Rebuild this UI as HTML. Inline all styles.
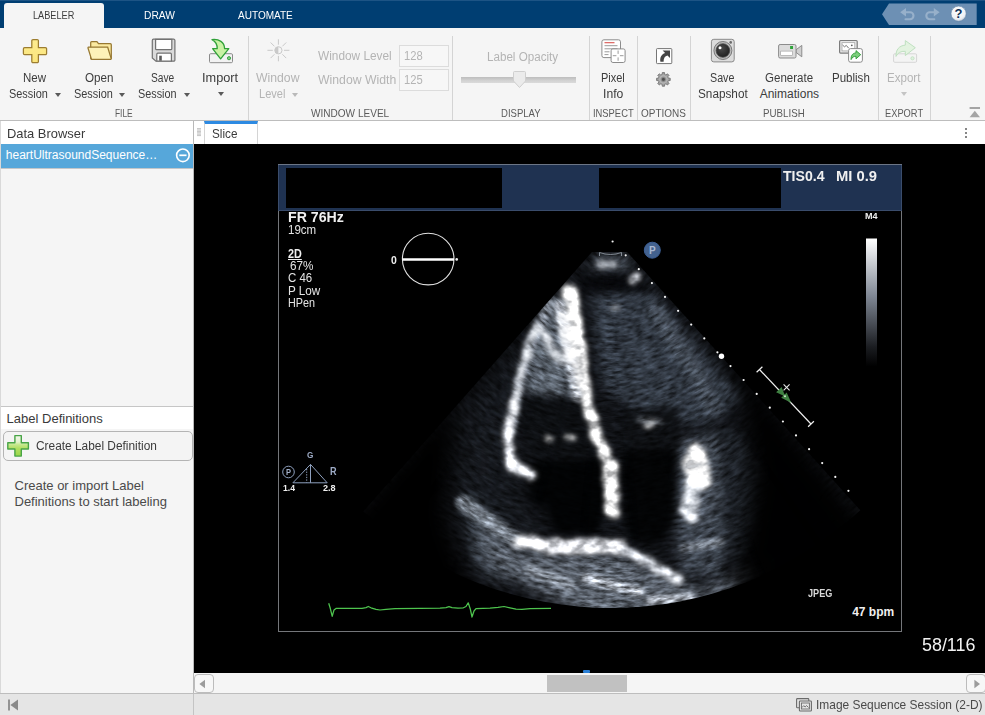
<!DOCTYPE html>
<html><head><meta charset="utf-8">
<style>
*{box-sizing:border-box;margin:0;padding:0}
html,body{width:985px;height:715px;overflow:hidden;background:#f5f5f5;font-family:"Liberation Sans",sans-serif;}
.a{position:absolute;white-space:nowrap}
.t{position:absolute;white-space:nowrap;font-size:12px;color:#3c3c3c;line-height:14px;transform-origin:0 0}
.c{text-align:center}
.dis{color:#b4b4b4}
.sec{position:absolute;white-space:nowrap;font-size:11px;color:#5a5a5a;line-height:12px;transform-origin:0 0}
.sep{position:absolute;top:36px;width:1px;height:84px;background:#d4d4d4}
.tab{position:absolute;white-space:nowrap;font-size:11px;color:#fff;line-height:12px;transform-origin:0 0}
.us{position:absolute;white-space:nowrap;color:#f0f0f0;line-height:12px;font-size:12px;transform-origin:0 0}
</style></head><body>
<!-- top bar -->
<div class="a" style="left:0;top:0;width:985px;height:28px;background:#003e72"></div>
<div class="a" style="left:0;top:0;width:985px;height:1px;background:#1d5485"></div>
<div class="a" style="left:4px;top:3px;width:100px;height:26px;background:#f5f5f5;border-radius:3px 3px 0 0"></div>
<div class="tab" id="tLab" style="left:33.2px;top:9.0px;font-size:11px;line-height:13px;transform:scaleX(0.834);color:#3c3c3c;">LABELER</div>
<div class="tab" id="tDraw" style="left:144.2px;top:9.0px;font-size:11px;line-height:13px;transform:scaleX(0.931);">DRAW</div>
<div class="tab" id="tAuto" style="left:238.1px;top:9.0px;font-size:11px;line-height:13px;transform:scaleX(0.912);">AUTOMATE</div>
<!-- toolstrip bg -->
<div class="a" style="left:0;top:28px;width:985px;height:92px;background:#f5f5f5"></div>
<div class="a" style="left:0;top:120px;width:985px;height:1px;background:#bdbdbd"></div>
<div class="sep" style="left:248px"></div>
<div class="sep" style="left:452px"></div>
<div class="sep" style="left:589px"></div>
<div class="sep" style="left:637px"></div>
<div class="sep" style="left:690px"></div>
<div class="sep" style="left:878px"></div>
<div class="sep" style="left:930px"></div>
<div class="t" style="left:22.9px;top:70.5px;font-size:12px;line-height:14px;transform:scaleX(0.958);">New</div>
<div class="t" style="left:8.9px;top:86.5px;font-size:12px;line-height:14px;transform:scaleX(0.909);">Session</div>
<div class="t" style="left:84.5px;top:70.5px;font-size:12px;line-height:14px;transform:scaleX(0.971);">Open</div>
<div class="t" style="left:73.6px;top:86.5px;font-size:12px;line-height:14px;transform:scaleX(0.911);">Session</div>
<div class="t" style="left:151.3px;top:70.5px;font-size:12px;line-height:14px;transform:scaleX(0.852);">Save</div>
<div class="t" style="left:138.1px;top:86.5px;font-size:12px;line-height:14px;transform:scaleX(0.904);">Session</div>
<div class="t" style="left:202.0px;top:70.5px;font-size:12px;line-height:14px;transform:scaleX(1.062);">Import</div>
<div class="a" style="left:54.8px;top:92.5px;width:0;height:0;border-left:3.5px solid transparent;border-right:3.5px solid transparent;border-top:4px solid #5a5a5a"></div>
<div class="a" style="left:119.4px;top:92.5px;width:0;height:0;border-left:3.5px solid transparent;border-right:3.5px solid transparent;border-top:4px solid #5a5a5a"></div>
<div class="a" style="left:183.7px;top:92.5px;width:0;height:0;border-left:3.5px solid transparent;border-right:3.5px solid transparent;border-top:4px solid #5a5a5a"></div>
<div class="a" style="left:218.0px;top:91.5px;width:0;height:0;border-left:3.5px solid transparent;border-right:3.5px solid transparent;border-top:4px solid #5a5a5a"></div>
<div class="sec" style="left:115.0px;top:106.5px;font-size:11px;line-height:13px;transform:scaleX(0.762);">FILE</div>
<div class="t" style="left:256.3px;top:70.5px;font-size:12px;line-height:14px;transform:scaleX(1.019);color:#b4b4b4;">Window</div>
<div class="t" style="left:259.1px;top:86.5px;font-size:12px;line-height:14px;transform:scaleX(0.920);color:#b4b4b4;">Level</div>
<div class="a" style="left:292.0px;top:92.5px;width:0;height:0;border-left:3.5px solid transparent;border-right:3.5px solid transparent;border-top:4px solid #b9b9b9"></div>
<div class="t" style="left:317.7px;top:49.4px;font-size:12px;line-height:14px;transform:scaleX(0.987);color:#b4b4b4;">Window Level</div>
<div class="t" style="left:317.7px;top:73.1px;font-size:12px;line-height:14px;transform:scaleX(1.020);color:#b4b4b4;">Window Width</div>
<div class="a" style="left:399px;top:45px;width:50px;height:22px;border:1px solid #dcdcdc;background:#f7f7f7"></div>
<div class="a" style="left:399px;top:69px;width:50px;height:22px;border:1px solid #dcdcdc;background:#f7f7f7"></div>
<div class="t" style="left:404.3px;top:49.4px;font-size:12px;line-height:14px;transform:scaleX(0.934);color:#b4b4b4;">128</div>
<div class="t" style="left:404.3px;top:73.1px;font-size:12px;line-height:14px;transform:scaleX(0.934);color:#b4b4b4;">125</div>
<div class="sec" style="left:310.5px;top:106.5px;font-size:11px;line-height:13px;transform:scaleX(0.914);">WINDOW LEVEL</div>
<div class="t" style="left:486.8px;top:49.8px;font-size:12px;line-height:14px;transform:scaleX(0.969);color:#b4b4b4;">Label Opacity</div>
<div class="a" style="left:461px;top:77px;width:115px;height:6px;background:linear-gradient(#bdbdbd,#d2d2d2 60%,#dadada)"></div>
<svg class="a" style="left:512px;top:70px" width="16" height="19" viewBox="0 0 16 19"><path d="M2.5 1.5h10a1 1 0 0 1 1 1v8.5l-6 6.5l-6-6.5v-8.5a1 1 0 0 1 1-1z" fill="#ebebeb" stroke="#cfcfcf" stroke-width="1"/></svg>
<div class="sec" style="left:500.8px;top:106.5px;font-size:11px;line-height:13px;transform:scaleX(0.867);">DISPLAY</div>
<div class="t" style="left:601.3px;top:70.5px;font-size:12px;line-height:14px;transform:scaleX(0.915);">Pixel</div>
<div class="t" style="left:603.1px;top:86.5px;font-size:12px;line-height:14px;transform:scaleX(1.014);">Info</div>
<div class="sec" style="left:592.9px;top:106.5px;font-size:11px;line-height:13px;transform:scaleX(0.852);">INSPECT</div>
<div class="sec" style="left:641.1px;top:106.5px;font-size:11px;line-height:13px;transform:scaleX(0.907);">OPTIONS</div>
<div class="t" style="left:710.4px;top:70.5px;font-size:12px;line-height:14px;transform:scaleX(0.892);">Save</div>
<div class="t" style="left:698.2px;top:86.5px;font-size:12px;line-height:14px;transform:scaleX(0.980);">Snapshot</div>
<div class="t" style="left:765.2px;top:70.5px;font-size:12px;line-height:14px;transform:scaleX(0.961);">Generate</div>
<div class="t" style="left:759.7px;top:86.5px;font-size:12px;line-height:14px;">Animations</div>
<div class="t" style="left:831.6px;top:70.5px;font-size:12px;line-height:14px;transform:scaleX(0.960);">Publish</div>
<div class="sec" style="left:763.1px;top:106.5px;font-size:11px;line-height:13px;transform:scaleX(0.886);">PUBLISH</div>
<div class="t" style="left:887.1px;top:70.5px;font-size:12px;line-height:14px;transform:scaleX(0.963);color:#b4b4b4;">Export</div>
<div class="a" style="left:900.5px;top:92.0px;width:0;height:0;border-left:3.5px solid transparent;border-right:3.5px solid transparent;border-top:4px solid #c4c4c4"></div>
<div class="sec" style="left:884.9px;top:106.5px;font-size:11px;line-height:13px;transform:scaleX(0.846);">EXPORT</div>
<svg class="a" style="left:0;top:0" width="985" height="121" viewBox="0 0 985 121">
<defs>
<linearGradient id="gPlus" x1="0" y1="0" x2="0" y2="1"><stop offset="0" stop-color="#fdec90"/><stop offset="1" stop-color="#fbe57c"/></linearGradient>
<radialGradient id="gLens" cx="0.4" cy="0.35" r="0.7"><stop offset="0" stop-color="#4a4a4a"/><stop offset="1" stop-color="#1e1e1e"/></radialGradient>
<radialGradient id="gGear" cx="0.5" cy="0.5" r="0.5"><stop offset="0" stop-color="#5e5e5e"/><stop offset="0.3" stop-color="#8a8a8a"/><stop offset="0.5" stop-color="#b6b6b6"/><stop offset="0.75" stop-color="#a2a2a2"/><stop offset="1" stop-color="#929292"/></radialGradient>
<radialGradient id="gHelp" cx="0.45" cy="0.35" r="0.7"><stop offset="0" stop-color="#ffffff"/><stop offset="0.7" stop-color="#eef1f5"/><stop offset="1" stop-color="#b9c4d2"/></radialGradient>
</defs>
<!-- New Session plus -->
<path d="M33 39.5h4.200a1.2 1.2 0 0 1 1.2 1.2v7h7a1.2 1.2 0 0 1 1.2 1.2v4.500a1.2 1.2 0 0 1 -1.2 1.2h-7v6.900a1.2 1.2 0 0 1 -1.2 1.2h-4.200a1.2 1.2 0 0 1 -1.2 -1.2v-6.900h-7.200a1.2 1.2 0 0 1 -1.2 -1.2v-4.500a1.2 1.2 0 0 1 1.2 -1.2h7.200v-7a1.2 1.2 0 0 1 1.2 -1.2z" fill="url(#gPlus)" stroke="#9c7d30" stroke-width="1.250"/>
<!-- Open folder -->
<path d="M90.7 42.6a1 1 0 0 1 1-1h5.2l1.6 2.1h11.8a1 1 0 0 1 1 1v13.6l-1 1h-18.6a1 1 0 0 1 -1-1z" fill="#fbeaa0" stroke="#977832" stroke-width="1.250"/>
<path d="M88.5 47.2h19.2l3.4 11.2a0.8 0.8 0 0 1 -0.8 1h-18a1 1 0 0 1 -1-0.8l-3.3-10.6a0.7 0.7 0 0 1 0.5 -0.8z" fill="#fdf2b8" stroke="#977832" stroke-width="1.250"/>
<!-- Save floppy -->
<path d="M153.5 39.2h20.2a1.2 1.2 0 0 1 1.2 1.2v19.6a1.2 1.2 0 0 1 -1.2 1.2h-17.8l-3.6-3.2v-17.6a1.2 1.2 0 0 1 1.2 -1.2z" fill="#dadada" stroke="#727272" stroke-width="1.200"/>
<path d="M155.6 39.3h16.2v9.4a1 1 0 0 1 -1 1h-14.2a1 1 0 0 1 -1-1z" fill="#ffffff" stroke="#727272" stroke-width="1.200"/>
<path d="M156.8 61.2v-7a1 1 0 0 1 1-1h12.6a1 1 0 0 1 1 1v7z" fill="#ffffff" stroke="#727272" stroke-width="1.200"/>
<rect x="159.2" y="55.7" width="2.6" height="5" fill="#5a5a5a"/>
<!-- Import -->
<rect x="209.5" y="53.7" width="23" height="9" rx="1.2" fill="#f2f2f2" stroke="#8a8a8a" stroke-width="1"/>
<circle cx="229" cy="58.2" r="1.6" fill="#7ed07e" stroke="#2f9e3a" stroke-width="0.9"/>
<path d="M212 39.6c7-0.8 12.500 2.400 12.600 9.100h4.200l-8.200 10.100l-8.000 -10.100h4.600c0.200-4.200-1.800-7.300-5.200-9.100z" fill="#c9f2a4" stroke="#2fa038" stroke-width="1.300" stroke-linejoin="round"/>
<!-- Window level (disabled) -->
<g stroke="#c9c9c9" stroke-width="1" fill="none">
<circle cx="278.4" cy="50.3" r="3.6"/>
<path d="M278.4 46.7a3.6 3.6 0 0 0 0 7.2z" fill="#c9c9c9" stroke="none"/>
<path d="M278.4 39.3v5.400M278.4 55.900v5.400M267.400 50.300h5.400M284 50.300h5.400M270.600 42.500l3.800 3.800M282.400 54.300l3.800 3.800M286.200 42.500l-3.800 3.800M274.400 54.300l-3.800 3.800"/>
</g>
<!-- Pixel info -->
<rect x="601.9" y="39.8" width="18.600" height="17.800" rx="2" fill="#ffffff" stroke="#8c8c8c" stroke-width="1"/>
<path d="M604.500 42.700h10" stroke="#d9534f" stroke-width="1.100"/>
<path d="M604.500 45.700h13M604.500 48.800h13M604.500 51.800h5M604.500 54.600h4" stroke="#9a9a9a" stroke-width="1"/>
<rect x="611.100" y="48.900" width="14" height="13.600" rx="1.800" fill="#ffffff" stroke="#8c8c8c" stroke-width="1"/>
<path d="M618.100 50.500v3.400M618.100 57.400v3.400M612.800 55.700h3.600M619.900 55.700h3.600" stroke="#9a9a9a" stroke-width="1"/>
<!-- Options: pop-out -->
<rect x="656.500" y="48.600" width="15.300" height="15" rx="0.800" fill="#ffffff" stroke="#767676" stroke-width="1"/>
<path d="M662.600 50.600h7.400v7.400l-2.500-2.500c-2.700 0.900-4 2.700-3.900 6.200h-3.200c-0.700-4.300 1.100-7.300 4.700-8.600z" fill="#444444"/>
<!-- Options: gear -->
<g transform="translate(663.4 79.4)"><path d="M-1.28 -4.94 L-1.14 -6.81 L1.14 -6.81 L1.28 -4.94 L2.59 -4.39 L4.01 -5.62 L5.62 -4.01 L4.39 -2.59 L4.94 -1.28 L6.81 -1.14 L6.81 1.14 L4.94 1.28 L4.39 2.59 L5.62 4.01 L4.01 5.62 L2.59 4.39 L1.28 4.94 L1.14 6.81 L-1.14 6.81 L-1.28 4.94 L-2.59 4.39 L-4.01 5.62 L-5.62 4.01 L-4.39 2.59 L-4.94 1.28 L-6.81 1.14 L-6.81 -1.14 L-4.94 -1.28 L-4.39 -2.59 L-5.62 -4.01 L-4.01 -5.62 L-2.59 -4.39Z" fill="url(#gGear)" stroke="#767676" stroke-width="0.9" stroke-linejoin="round"/><circle r="1.4" fill="#4e4e4e"/></g>
<!-- Save snapshot -->
<rect x="711.400" y="39.300" width="22.800" height="22.600" rx="2.400" fill="#dcdcdc" stroke="#8a8a8a" stroke-width="1"/>
<circle cx="722.900" cy="50.500" r="9" fill="#b9b9b9" stroke="#7a7a7a" stroke-width="1"/>
<circle cx="722.900" cy="50.500" r="6.800" fill="url(#gLens)" stroke="#4a4a4a" stroke-width="0.800"/>
<circle cx="720" cy="47.700" r="1.500" fill="#ffffff"/>
<circle cx="730.700" cy="42.400" r="1.300" fill="#6a6a6a"/>
<!-- Generate animations -->
<path d="M796 49.800l5.800-4.400v11.400l-5.800-4.400z" fill="#d0d0d0" stroke="#8c8c8c" stroke-width="1" stroke-linejoin="round"/>
<rect x="778.600" y="44.500" width="17.400" height="13.500" rx="1.500" fill="#dcdcdc" stroke="#8c8c8c" stroke-width="1"/>
<rect x="780.700" y="51.100" width="11.800" height="4.400" fill="#ffffff" stroke="#9a9a9a" stroke-width="0.600"/>
<rect x="790.100" y="46" width="2.900" height="3" fill="#2ea43a"/>
<!-- Publish -->
<rect x="839.600" y="40.500" width="17.600" height="12.600" rx="1" fill="#e6e6e6" stroke="#7c7c7c" stroke-width="1.200"/>
<rect x="842" y="42.700" width="12.800" height="8.200" fill="#ffffff" stroke="#9c9c9c" stroke-width="0.700"/>
<path d="M842.500 45l2 1.800l1.800-1.400l2.400 2.800" fill="none" stroke="#6a6a6a" stroke-width="0.900"/>
<circle cx="851.800" cy="45.300" r="0.900" fill="#5a5a5a"/>
<rect x="848.600" y="48.600" width="13.800" height="13.600" rx="2" fill="#ffffff" stroke="#8a8a8a" stroke-width="1"/>
<path d="M856 50.600l4.700 4.100l-4.700 4.100v-2.500c-2.400 0-3.900 1-4.900 3.300c-0.300-4 1.500-6.500 4.900-6.700z" fill="#7ccf7c" stroke="#2c9a36" stroke-width="0.900" stroke-linejoin="round"/>
<!-- Export (disabled) -->
<rect x="893.600" y="53.800" width="23" height="8.500" rx="1.200" fill="#f4f4f4" stroke="#d6d6d6" stroke-width="1"/>
<circle cx="912.500" cy="58.300" r="1.600" fill="#dff0df" stroke="#c1e2c2" stroke-width="0.900"/>
<path d="M905.300 40.600l10 7.100l-10 7.900v-4.300c-4.600-0.200-7.500 1.400-9.300 5.100c-0.300-6.600 3.100-10.700 9.300-11.300z" fill="#e3f3e0" stroke="#bfe0c0" stroke-width="1" stroke-linejoin="round"/>
<!-- collapse -->
<path d="M969.600 108h10.400" stroke="#a4a4a4" stroke-width="2"/>
<path d="M969.600 117.200l5.200-6.400l5.200 6.400z" fill="#a4a4a4"/>
<!-- quick access -->
<path d="M882 14.200l7-10.800h87.700v21.600h-87.700z" fill="#6d90b4"/>
<g fill="none" stroke="#97b0ca" stroke-width="2.1" stroke-linecap="round" stroke-linejoin="round">
<path d="M905 12.3h5a3.5 3.5 0 0 1 0 7h-4.500"/>
<path d="M933.8 12.3h-4a3.5 3.5 0 0 0 0 7h4.500"/>
</g>
<path d="M900.2 12.3l5.800-4.300v8.600z" fill="#97b0ca"/>
<path d="M939.600 12.300l-5.800-4.300v8.600z" fill="#97b0ca"/>
<circle cx="958.600" cy="13.700" r="7.600" fill="url(#gHelp)" stroke="#5d7fa3" stroke-width="0.600"/>
<text x="958.600" y="18.400" text-anchor="middle" font-family="Liberation Sans, sans-serif" font-weight="bold" font-size="13" fill="#0e2f57">?</text>
</svg>


<div class="a" style="left:0;top:121px;width:194px;height:573px;background:#f5f5f5"></div>
<div class="a" style="left:0;top:121px;width:1px;height:573px;background:#d9d9d9"></div>
<div class="a" style="left:193px;top:121px;width:1px;height:573px;background:#b9b9b9"></div>
<div class="a" style="left:1px;top:121px;width:192px;height:23px;background:#ffffff"></div>
<div class="t" style="left:6.6px;top:126.3px;font-size:13px;line-height:15px;transform:scaleX(0.993);color:#3a3a3a;">Data Browser</div>
<div class="a" style="left:1px;top:144px;width:192px;height:25px;background:#56a7da;border-bottom:1px solid #c2c6c9"></div>
<div class="t" style="left:5.8px;top:148.1px;font-size:12px;line-height:14px;color:#ffffff;">heartUltrasoundSequence…</div>
<svg class="a" style="left:174px;top:147px" width="18" height="17" viewBox="174 147 18 17"><circle cx="182.900" cy="155.300" r="6.300" fill="none" stroke="#fff" stroke-width="1.600"/><path d="M179.300 155.300h7.200" stroke="#fff" stroke-width="1.700"/></svg>
<div class="a" style="left:1px;top:406px;width:192px;height:1px;background:#c6c6c6"></div>
<div class="a" style="left:1px;top:407px;width:192px;height:22px;background:#ffffff"></div>
<div class="t" style="left:6.6px;top:411.4px;font-size:13px;line-height:15px;color:#3a3a3a;">Label Definitions</div>
<div class="a" style="left:3px;top:431px;width:190px;height:30px;background:#f4f4f4;border:1px solid #b4b4b4;border-radius:5px"></div>
<svg class="a" style="left:6px;top:434px" width="24" height="24" viewBox="6 434 24 24"><defs><linearGradient id="gGP" x1="0" y1="0" x2="0" y2="1"><stop offset="0" stop-color="#f2f8ec"/><stop offset="0.3" stop-color="#e2f2cc"/><stop offset="0.45" stop-color="#c4e88a"/><stop offset="0.62" stop-color="#b2df62"/><stop offset="1" stop-color="#9ad648"/></linearGradient></defs><path d="M14.900 435.600h6.400v7.100h7.100v6.300h-7.100v7.100h-6.400v-7.100h-7.100v-6.300h7.100z" fill="url(#gGP)" stroke="#48a446" stroke-width="1.400" stroke-linejoin="round"/></svg>
<div class="t" style="left:35.9px;top:439.3px;font-size:12px;line-height:14px;transform:scaleX(0.990);color:#3a3a3a;">Create Label Definition</div>
<div class="t" style="left:14.5px;top:477.7px;font-size:13px;line-height:15px;color:#4a4a4a;">Create or import Label</div>
<div class="t" style="left:14.5px;top:493.9px;font-size:13px;line-height:15px;color:#4a4a4a;">Definitions to start labeling</div>
<div class="a" style="left:194px;top:121px;width:791px;height:23px;background:#ffffff"></div>
<div class="a" style="left:204px;top:121px;width:54px;height:23px;background:#fff;border-left:1px solid #d4d4d4;border-right:1px solid #d4d4d4;border-top:3px solid #2d8ae2"></div>
<div class="t" style="left:211.6px;top:127.4px;font-size:12px;line-height:14px;transform:scaleX(0.977);color:#3a3a3a;">Slice</div>
<svg class="a" style="left:196px;top:127px" width="6" height="10" viewBox="196 127 6 10"><path d="M197 128.60h4M197 130.00h4M197 131.40h4M197 132.80h4M197 134.20h4M197 135.60h4" stroke="#b4b4b4" stroke-width="0.800"/></svg>
<div class="a" style="left:965px;top:127.500px;width:2px;height:2px;border-radius:1px;background:#5e5e5e;box-shadow:0 4px 0 #5e5e5e,0 8px 0 #5e5e5e"></div>

<div class="a" style="left:194px;top:144px;width:791px;height:529px;background:#000"></div>
<svg class="a" style="left:194px;top:144px" width="791" height="529" viewBox="194 144 791 529">
<defs>
<clipPath id="sec"><path d="M591.9 252 L363.1 511.6 A367 367 0 0 0 860.4 510.3 L627.2 252 Z"/></clipPath>
<filter id="spk0" x="150" y="60" width="920" height="640" filterUnits="userSpaceOnUse" color-interpolation-filters="sRGB">
<feGaussianBlur in="SourceGraphic" stdDeviation="2.2" result="b"/>
<feTurbulence type="fractalNoise" baseFrequency="0.085 0.3" numOctaves="3" seed="3" result="n"/>
<feColorMatrix in="n" type="matrix" values="1.45 0 0 0 -0.225  1.45 0 0 0 -0.225  1.45 0 0 0 -0.225  0 0 0 0 1" result="ng"/>
<feGaussianBlur in="ng" stdDeviation="0.7" result="ngb"/>
<feComposite in="b" in2="ngb" operator="arithmetic" k1="1.3" k2="0.35" k3="0" k4="0"/>
</filter>
<filter id="spk1" x="150" y="60" width="920" height="640" filterUnits="userSpaceOnUse" color-interpolation-filters="sRGB">
<feGaussianBlur in="SourceGraphic" stdDeviation="2.2" result="b"/>
<feTurbulence type="fractalNoise" baseFrequency="0.085 0.3" numOctaves="3" seed="10" result="n"/>
<feColorMatrix in="n" type="matrix" values="1.45 0 0 0 -0.225  1.45 0 0 0 -0.225  1.45 0 0 0 -0.225  0 0 0 0 1" result="ng"/>
<feGaussianBlur in="ng" stdDeviation="0.7" result="ngb"/>
<feComposite in="b" in2="ngb" operator="arithmetic" k1="1.3" k2="0.35" k3="0" k4="0"/>
</filter>
<filter id="spk2" x="150" y="60" width="920" height="640" filterUnits="userSpaceOnUse" color-interpolation-filters="sRGB">
<feGaussianBlur in="SourceGraphic" stdDeviation="2.2" result="b"/>
<feTurbulence type="fractalNoise" baseFrequency="0.085 0.3" numOctaves="3" seed="17" result="n"/>
<feColorMatrix in="n" type="matrix" values="1.45 0 0 0 -0.225  1.45 0 0 0 -0.225  1.45 0 0 0 -0.225  0 0 0 0 1" result="ng"/>
<feGaussianBlur in="ng" stdDeviation="0.7" result="ngb"/>
<feComposite in="b" in2="ngb" operator="arithmetic" k1="1.3" k2="0.35" k3="0" k4="0"/>
</filter>
<filter id="spk3" x="150" y="60" width="920" height="640" filterUnits="userSpaceOnUse" color-interpolation-filters="sRGB">
<feGaussianBlur in="SourceGraphic" stdDeviation="2.2" result="b"/>
<feTurbulence type="fractalNoise" baseFrequency="0.085 0.3" numOctaves="3" seed="24" result="n"/>
<feColorMatrix in="n" type="matrix" values="1.45 0 0 0 -0.225  1.45 0 0 0 -0.225  1.45 0 0 0 -0.225  0 0 0 0 1" result="ng"/>
<feGaussianBlur in="ng" stdDeviation="0.7" result="ngb"/>
<feComposite in="b" in2="ngb" operator="arithmetic" k1="1.3" k2="0.35" k3="0" k4="0"/>
</filter>
<filter id="spk4" x="150" y="60" width="920" height="640" filterUnits="userSpaceOnUse" color-interpolation-filters="sRGB">
<feGaussianBlur in="SourceGraphic" stdDeviation="2.2" result="b"/>
<feTurbulence type="fractalNoise" baseFrequency="0.085 0.3" numOctaves="3" seed="31" result="n"/>
<feColorMatrix in="n" type="matrix" values="1.45 0 0 0 -0.225  1.45 0 0 0 -0.225  1.45 0 0 0 -0.225  0 0 0 0 1" result="ng"/>
<feGaussianBlur in="ng" stdDeviation="0.7" result="ngb"/>
<feComposite in="b" in2="ngb" operator="arithmetic" k1="1.3" k2="0.35" k3="0" k4="0"/>
</filter>
<filter id="spk5" x="150" y="60" width="920" height="640" filterUnits="userSpaceOnUse" color-interpolation-filters="sRGB">
<feGaussianBlur in="SourceGraphic" stdDeviation="2.2" result="b"/>
<feTurbulence type="fractalNoise" baseFrequency="0.085 0.3" numOctaves="3" seed="38" result="n"/>
<feColorMatrix in="n" type="matrix" values="1.45 0 0 0 -0.225  1.45 0 0 0 -0.225  1.45 0 0 0 -0.225  0 0 0 0 1" result="ng"/>
<feGaussianBlur in="ng" stdDeviation="0.7" result="ngb"/>
<feComposite in="b" in2="ngb" operator="arithmetic" k1="1.3" k2="0.35" k3="0" k4="0"/>
</filter>
<filter id="spk6" x="150" y="60" width="920" height="640" filterUnits="userSpaceOnUse" color-interpolation-filters="sRGB">
<feGaussianBlur in="SourceGraphic" stdDeviation="2.2" result="b"/>
<feTurbulence type="fractalNoise" baseFrequency="0.085 0.3" numOctaves="3" seed="45" result="n"/>
<feColorMatrix in="n" type="matrix" values="1.45 0 0 0 -0.225  1.45 0 0 0 -0.225  1.45 0 0 0 -0.225  0 0 0 0 1" result="ng"/>
<feGaussianBlur in="ng" stdDeviation="0.7" result="ngb"/>
<feComposite in="b" in2="ngb" operator="arithmetic" k1="1.3" k2="0.35" k3="0" k4="0"/>
</filter>
<filter id="spk7" x="150" y="60" width="920" height="640" filterUnits="userSpaceOnUse" color-interpolation-filters="sRGB">
<feGaussianBlur in="SourceGraphic" stdDeviation="2.2" result="b"/>
<feTurbulence type="fractalNoise" baseFrequency="0.085 0.3" numOctaves="3" seed="52" result="n"/>
<feColorMatrix in="n" type="matrix" values="1.45 0 0 0 -0.225  1.45 0 0 0 -0.225  1.45 0 0 0 -0.225  0 0 0 0 1" result="ng"/>
<feGaussianBlur in="ng" stdDeviation="0.7" result="ngb"/>
<feComposite in="b" in2="ngb" operator="arithmetic" k1="1.3" k2="0.35" k3="0" k4="0"/>
</filter>
<filter id="spk8" x="150" y="60" width="920" height="640" filterUnits="userSpaceOnUse" color-interpolation-filters="sRGB">
<feGaussianBlur in="SourceGraphic" stdDeviation="2.2" result="b"/>
<feTurbulence type="fractalNoise" baseFrequency="0.085 0.3" numOctaves="3" seed="59" result="n"/>
<feColorMatrix in="n" type="matrix" values="1.45 0 0 0 -0.225  1.45 0 0 0 -0.225  1.45 0 0 0 -0.225  0 0 0 0 1" result="ng"/>
<feGaussianBlur in="ng" stdDeviation="0.7" result="ngb"/>
<feComposite in="b" in2="ngb" operator="arithmetic" k1="1.3" k2="0.35" k3="0" k4="0"/>
</filter>
<filter id="brt" x="194" y="144" width="791" height="529" filterUnits="userSpaceOnUse" color-interpolation-filters="sRGB">
<feTurbulence type="fractalNoise" baseFrequency="0.05 0.07" numOctaves="2" seed="5" result="w"/>
<feDisplacementMap in="SourceGraphic" in2="w" scale="10" xChannelSelector="R" yChannelSelector="G" result="d"/>
<feGaussianBlur in="d" stdDeviation="2.7" result="b"/>
<feTurbulence type="fractalNoise" baseFrequency="0.07 0.1" numOctaves="3" seed="11" result="n"/>
<feColorMatrix in="n" type="matrix" values="2 0 0 0 -0.5  2 0 0 0 -0.5  2 0 0 0 -0.5  0 0 0 0 1" result="ng"/>
<feComposite in="b" in2="ng" operator="arithmetic" k1="0.8" k2="0.68" k3="0" k4="0"/>
</filter>
<filter id="bl6" x="-30%" y="-30%" width="160%" height="160%" color-interpolation-filters="sRGB"><feGaussianBlur stdDeviation="6"/></filter>
<filter id="bl10" x="-30%" y="-30%" width="160%" height="160%" color-interpolation-filters="sRGB"><feGaussianBlur stdDeviation="10"/></filter>
<filter id="bl2" x="-10%" y="-10%" width="120%" height="120%" color-interpolation-filters="sRGB"><feGaussianBlur stdDeviation="2.5"/></filter>
<filter id="bl3" x="-30%" y="-30%" width="160%" height="160%" color-interpolation-filters="sRGB"><feGaussianBlur stdDeviation="3"/></filter>
<linearGradient id="gbar" x1="0" y1="0" x2="0" y2="1"><stop offset="0" stop-color="#ffffff"/><stop offset="0.45" stop-color="#7f8794"/><stop offset="0.85" stop-color="#1a1c20"/><stop offset="1" stop-color="#000"/></linearGradient>
<g id="tis">
<!-- base -->
<path d="M560 230 L330 530 L620 640 L900 530 L660 230 Z" fill="#111317"/>
<!-- upper right medium-gray tissue -->
<path d="M590 292 L645 286 L745 395 L705 425 L640 415 L603 385 Z" fill="#323943" filter="url(#bl6)"/>
<!-- right tissue band -->
<path d="M652 306 L700 378 L716 414" fill="none" stroke="#454d58" stroke-width="15" filter="url(#bl3)"/>
<!-- region between left wall & septum -->
<path d="M568 292 L546 302 L522 365 L528 394 L584 398 Z" fill="#58606a" filter="url(#bl3)"/>
<!-- apex halo -->
<path d="M596 254 L626 254 L632 272 L590 272 Z" fill="#3a4048" filter="url(#bl3)"/>
<!-- dark near-field band -->
<path d="M585 275 L640 275 L652 292 L574 292 Z" fill="#08090c" filter="url(#bl3)"/>
<!-- left outer tissue -->
<path d="M530 330 L470 420 L462 520 L520 580 L540 555 L500 470 Z" fill="#16191e" filter="url(#bl10)"/>
<path d="M468 492 L505 530 L500 585 L472 560 Z" fill="#3b424b" filter="url(#bl6)"/>
<!-- bottom haze -->
<path d="M475 525 L520 552 L620 556 L700 590 L765 562 L740 620 L610 628 L545 596 L492 566 Z" fill="#585f69" filter="url(#bl6)"/>
<!-- lower right tissue -->
<path d="M705 430 L745 430 L770 480 L745 560 L705 560 Z" fill="#1d2127" filter="url(#bl6)"/>
<path d="M676 518 L722 518 L722 578 L680 572 Z" fill="#3e454f" filter="url(#bl6)"/>
<path d="M676 440 L715 436 L722 500 L712 525 L676 520 Z" fill="#444b55" filter="url(#bl6)"/>
<!-- dark chambers -->
<path d="M526 396 L586 400 L596 440 L600 456 L530 456 L519 425 Z" fill="#0d0f12" filter="url(#bl3)"/>
<path d="M532 460 L602 458 L607 470 L606 505 L597 534 L552 534 L548 510 L528 502 Z" fill="#020304" filter="url(#bl3)"/>
<path d="M622 410 L678 406 L680 448 L622 450 Z" fill="#0e1013" filter="url(#bl3)"/>
<path d="M622 450 L678 448 L675 520 L660 545 L628 540 L620 480 Z" fill="#030405" filter="url(#bl3)"/>
<!-- fades to black -->
<path d="M330 540 L575 255 L545 300 L456 410 L446 520 L470 585 L484 640 L380 640 Z" fill="#000" filter="url(#bl10)"/>
<path d="M880 540 L650 250 L686 300 L742 400 L752 470 L744 540 L728 600 L800 660 Z" fill="#000" filter="url(#bl10)" opacity="0.950"/>
<!-- medium bright structures (noisy) -->
<g fill="none" stroke-linecap="round" stroke-linejoin="round">
<path d="M560 306 L568 350 L578 396" stroke="#d4dae4" stroke-width="11" opacity="0.800"/>
<path d="M549 302 L535 336 L520 380 L511 430" stroke="#8e96a2" stroke-width="9" opacity="0.800"/>
<path d="M463 503 L498 528 L518 541" stroke="#848c97" stroke-width="15" opacity="0.850"/>
<path d="M585 578 L640 592 M650 601 L690 598" stroke="#d4dae4" stroke-width="9" opacity="0.700"/>
<path d="M530 570 L570 585" stroke="#aab2be" stroke-width="10" opacity="0.600"/>
<path d="M640 420 L660 422" stroke="#9aa2ad" stroke-width="6" opacity="0.500"/>
<path d="M684 548 L720 542" stroke="#aab2be" stroke-width="8" opacity="0.600"/>
</g>
</g>

<mask id="w0" maskUnits="userSpaceOnUse" x="194" y="144" width="791" height="529"><path d="M611.0 239.0 L258.8 469.7 L370.1 585.0 Z" fill="#fff" filter="url(#bl2)"/></mask>
<mask id="w1" maskUnits="userSpaceOnUse" x="194" y="144" width="791" height="529"><path d="M611.0 239.0 L370.1 585.0 L433.5 621.6 Z" fill="#fff" filter="url(#bl2)"/></mask>
<mask id="w2" maskUnits="userSpaceOnUse" x="194" y="144" width="791" height="529"><path d="M611.0 239.0 L433.5 621.6 L502.3 646.7 Z" fill="#fff" filter="url(#bl2)"/></mask>
<mask id="w3" maskUnits="userSpaceOnUse" x="194" y="144" width="791" height="529"><path d="M611.0 239.0 L502.3 646.7 L574.4 659.4 Z" fill="#fff" filter="url(#bl2)"/></mask>
<mask id="w4" maskUnits="userSpaceOnUse" x="194" y="144" width="791" height="529"><path d="M611.0 239.0 L574.4 659.4 L647.6 659.4 Z" fill="#fff" filter="url(#bl2)"/></mask>
<mask id="w5" maskUnits="userSpaceOnUse" x="194" y="144" width="791" height="529"><path d="M611.0 239.0 L647.6 659.4 L719.7 646.7 Z" fill="#fff" filter="url(#bl2)"/></mask>
<mask id="w6" maskUnits="userSpaceOnUse" x="194" y="144" width="791" height="529"><path d="M611.0 239.0 L719.7 646.7 L788.5 621.6 Z" fill="#fff" filter="url(#bl2)"/></mask>
<mask id="w7" maskUnits="userSpaceOnUse" x="194" y="144" width="791" height="529"><path d="M611.0 239.0 L788.5 621.6 L851.9 585.0 Z" fill="#fff" filter="url(#bl2)"/></mask>
<mask id="w8" maskUnits="userSpaceOnUse" x="194" y="144" width="791" height="529"><path d="M611.0 239.0 L851.9 585.0 L963.2 469.7 Z" fill="#fff" filter="url(#bl2)"/></mask>
</defs>
<rect x="278.5" y="164.5" width="623" height="467" fill="none" stroke="#74767a" stroke-width="1"/>
<rect x="279" y="165" width="622" height="45" fill="#1f3251"/>
<rect x="278.500" y="164.500" width="623" height="46" fill="none" stroke="#3a4c6b" stroke-width="1"/><path d="M278 164.500h624" stroke="#6c7686" stroke-width="1"/>
<rect x="286" y="168" width="216" height="40" fill="#000"/>
<rect x="599" y="168" width="182" height="40" fill="#000"/>
<g clip-path="url(#sec)">
<g filter="url(#spk4)"><use href="#tis"/></g>
<g mask="url(#w0)"><g transform="rotate(40 611 241)"><g filter="url(#spk0)"><g transform="rotate(-40 611 241)"><use href="#tis"/></g></g></g></g>
<g mask="url(#w1)"><g transform="rotate(30 611 241)"><g filter="url(#spk1)"><g transform="rotate(-30 611 241)"><use href="#tis"/></g></g></g></g>
<g mask="url(#w2)"><g transform="rotate(20 611 241)"><g filter="url(#spk2)"><g transform="rotate(-20 611 241)"><use href="#tis"/></g></g></g></g>
<g mask="url(#w3)"><g transform="rotate(10 611 241)"><g filter="url(#spk3)"><g transform="rotate(-10 611 241)"><use href="#tis"/></g></g></g></g>
<g mask="url(#w4)"><g transform="rotate(0 611 241)"><g filter="url(#spk4)"><g transform="rotate(0 611 241)"><use href="#tis"/></g></g></g></g>
<g mask="url(#w5)"><g transform="rotate(-10 611 241)"><g filter="url(#spk5)"><g transform="rotate(10 611 241)"><use href="#tis"/></g></g></g></g>
<g mask="url(#w6)"><g transform="rotate(-20 611 241)"><g filter="url(#spk6)"><g transform="rotate(20 611 241)"><use href="#tis"/></g></g></g></g>
<g mask="url(#w7)"><g transform="rotate(-30 611 241)"><g filter="url(#spk7)"><g transform="rotate(30 611 241)"><use href="#tis"/></g></g></g></g>
<g mask="url(#w8)"><g transform="rotate(-40 611 241)"><g filter="url(#spk8)"><g transform="rotate(40 611 241)"><use href="#tis"/></g></g></g></g>
<!-- brightest structures (light noise) -->
<g filter="url(#brt)" style="mix-blend-mode:screen" fill="none" stroke-linecap="round" stroke-linejoin="round">
<rect x="194" y="144" width="791" height="529" fill="#000" stroke="none"/>
<path d="M570 289 L575 330 L584 385" stroke="#ffffff" stroke-width="14"/>
<path d="M584 385 L597 436 L609 464" stroke="#ffffff" stroke-width="10.500"/>
<path d="M610 466 L613 512" stroke="#ffffff" stroke-width="14"/>
<path d="M562 318 L569 360" stroke="#f0f4fc" stroke-width="7" opacity="0.900"/>
<path d="M537 322 L521 370 L515 398" stroke="#dfe5ee" stroke-width="6" opacity="0.850"/>
<path d="M514 400 L508 442 L514 466 L530 475" stroke="#f2f5fc" stroke-width="9"/>
<path d="M541 330 L551 352 L560 360" stroke="#e8edf6" stroke-width="7" opacity="0.900"/>
<path d="M520 543 L555 546 L622 547" stroke="#f6f8fe" stroke-width="13"/>
<path d="M622 548 L655 567 L680 580" stroke="#e6ebf4" stroke-width="9" opacity="0.950"/>
<path d="M696 455 L697 480" stroke="#ffffff" stroke-width="22"/>
<path d="M694 484 L689 513" stroke="#e6ebf4" stroke-width="16" opacity="0.900"/>
<path d="M601 264.500 L614 264.500" stroke="#e4e9f2" stroke-width="5.500"/>
<path d="M632 281 L639 276" stroke="#f0f4fc" stroke-width="5.500"/>
<path d="M612 308 L618 309" stroke="#e9eef7" stroke-width="4"/>
<path d="M548 439 L552 440 M567 437 L574 438 M645 423 L649 423" stroke="#ffffff" stroke-width="4.500"/>
</g>
</g>
<path d="M599.500 256 V252.500 Q610.500 256.500 621.500 252.500 V256" fill="none" stroke="#9aa2ad" stroke-width="1" opacity="0.800"/>

<rect x="866" y="238.500" width="11" height="128" fill="url(#gbar)"/>
<circle cx="428.200" cy="259.100" r="25.800" fill="none" stroke="#e0e0e0" stroke-width="1.100"/>
<path d="M402.400 259.500h51.600" stroke="#ffffff" stroke-width="2.400"/>
<circle cx="456.700" cy="259.400" r="1.300" fill="#ececec"/>
<circle cx="612.6" cy="241.5" r="1.1" fill="#f4f4f4"/><circle cx="625.7" cy="255.3" r="1.1" fill="#f4f4f4"/><circle cx="638.8" cy="269.2" r="1.1" fill="#f4f4f4"/><circle cx="651.9" cy="283.1" r="1.1" fill="#f4f4f4"/><circle cx="665.0" cy="296.9" r="1.1" fill="#f4f4f4"/><circle cx="678.1" cy="310.8" r="1.1" fill="#f4f4f4"/><circle cx="691.2" cy="324.6" r="1.1" fill="#f4f4f4"/><circle cx="704.3" cy="338.4" r="1.1" fill="#f4f4f4"/><circle cx="717.4" cy="352.3" r="1.1" fill="#f4f4f4"/><circle cx="730.5" cy="366.1" r="1.1" fill="#f4f4f4"/><circle cx="743.6" cy="380.0" r="1.1" fill="#f4f4f4"/><circle cx="756.7" cy="393.9" r="1.1" fill="#f4f4f4"/><circle cx="769.8" cy="407.7" r="1.1" fill="#f4f4f4"/><circle cx="782.9" cy="421.5" r="1.1" fill="#f4f4f4"/><circle cx="796.0" cy="435.4" r="1.1" fill="#f4f4f4"/><circle cx="809.1" cy="449.2" r="1.1" fill="#f4f4f4"/><circle cx="822.2" cy="463.1" r="1.1" fill="#f4f4f4"/><circle cx="835.3" cy="476.9" r="1.1" fill="#f4f4f4"/><circle cx="848.4" cy="490.8" r="1.1" fill="#f4f4f4"/>
<circle cx="721.500" cy="356.200" r="2.700" fill="#ffffff"/>
<g stroke="#f0f0f0" stroke-width="1.200" fill="none"><path d="M759.500 369.500L811 424"/><path d="M756.600 372.300l5.800-5.600M808.100 426.800l5.800-5.600"/></g>
<path d="M781.6 387.0L776.1 392.3L785.3 396.6ZM786.7 392.5L781.2 397.7L791.2 402.7Z" fill="#3f8042"/>
<path d="M783.600 384.400l6 6M789.600 384.400l-6 6" stroke="#e8e8e8" stroke-width="1.100"/>
<circle cx="785" cy="396.200" r="1" fill="#cfe6cf"/>
<circle cx="652.300" cy="250.200" r="8" fill="#43628f"/><circle cx="652.300" cy="250.200" r="8" fill="none" stroke="#3c5f96" stroke-width="1"/>
<text x="652.300" y="254" text-anchor="middle" font-family="Liberation Sans, sans-serif" font-weight="bold" font-size="10" fill="#aab9d2">P</text>
<g stroke="#8ea0be" stroke-width="1" fill="none"><path d="M310.500 464.400L292.900 482.800H327.200Z"/><path d="M310.500 464.400V482.800"/><path d="M306.700 469v13.500" stroke-dasharray="1.300 1.300"/><circle cx="288.500" cy="472" r="5.800"/></g>
<path d="M328.700 603.200L330.200 608L332.200 616.400L334 610L336 608.400L350 608.300L362 608.400L366 607.600L368.300 606.500L371 607.800L376 609.400L380 610L386 609.300L395 608.600L420 608.300L440 608.200L446 607.600L449 606.700L452 607.700L458 608.200L463 608L466 606.500L468.200 602.800L470.300 609L472 617L474 611L476 608.600L490 608.200L498 607.400L504 606.500L510 607.800L516 609.200L522 609.400L530 608.600L551 608.300" fill="none" stroke="#4ec44e" stroke-width="1.250" stroke-linejoin="round"/>
</svg>
<div class="us" style="left:287.5px;top:209.0px;font-size:14px;line-height:16px;transform:scaleX(1.010);font-weight:bold;">FR 76Hz</div>
<div class="us" style="left:287.5px;top:222.8px;font-size:12px;line-height:14px;transform:scaleX(0.961);color:#e4e4e4;">19cm</div>
<div class="us" style="left:287.5px;top:246.5px;font-size:12px;line-height:14px;transform:scaleX(0.900);font-weight:bold;text-decoration:underline;">2D</div>
<div class="us" style="left:290.3px;top:259.2px;font-size:12px;line-height:14px;transform:scaleX(0.978);color:#e4e4e4;">67%</div>
<div class="us" style="left:287.5px;top:271.4px;font-size:12px;line-height:14px;transform:scaleX(0.955);color:#e4e4e4;">C 46</div>
<div class="us" style="left:287.5px;top:284.1px;font-size:12px;line-height:14px;transform:scaleX(0.975);color:#e4e4e4;">P Low</div>
<div class="us" style="left:287.5px;top:296.1px;font-size:12px;line-height:14px;transform:scaleX(0.899);color:#e4e4e4;">HPen</div>
<div class="us" style="left:391.1px;top:253.7px;font-size:11px;line-height:13px;transform:scaleX(0.948);font-weight:bold;">0</div>
<div class="us" style="left:782.5px;top:167.5px;font-size:14px;line-height:16px;transform:scaleX(1.006);font-weight:bold;">TIS0.4</div>
<div class="us" style="left:836.0px;top:167.5px;font-size:14px;line-height:16px;transform:scaleX(1.056);font-weight:bold;">MI 0.9</div>
<div class="us" style="left:864.5px;top:211.4px;font-size:9px;line-height:10px;transform:scaleX(1.008);font-weight:bold;">M4</div>
<div class="us" style="left:807.5px;top:588.2px;font-size:10px;line-height:12px;transform:scaleX(0.911);font-weight:bold;color:#d8d8d8;">JPEG</div>
<div class="us" style="left:852.2px;top:605.3px;font-size:12px;line-height:14px;font-weight:bold;">47 bpm</div>
<div class="us" style="left:306.7px;top:449.5px;font-size:9px;line-height:10px;transform:scaleX(0.914);font-weight:bold;color:#9dabc6;">G</div>
<div class="us" style="left:329.6px;top:466.2px;font-size:10px;line-height:12px;transform:scaleX(0.914);font-weight:bold;color:#9dabc6;">R</div>
<div class="us" style="left:285.5px;top:467.2px;font-size:9px;line-height:10px;transform:scaleX(0.833);font-weight:bold;color:#a4b2cc;">P</div>
<div class="us" style="left:283.3px;top:482.9px;font-size:9px;line-height:10px;transform:scaleX(0.959);font-weight:bold;">1.4</div>
<div class="us" style="left:322.9px;top:482.9px;font-size:9px;line-height:10px;transform:scaleX(1.007);font-weight:bold;">2.8</div>
<div class="us" style="left:922.0px;top:635.1px;font-size:18px;line-height:20px;transform:scaleX(0.994);color:#f2f2f2;">58/116</div>

<div class="a" style="left:194px;top:673px;width:791px;height:20px;background:#f5f5f5"></div>
<div class="a" style="left:547px;top:675px;width:80px;height:17px;background:#c1c1c1"></div>
<div class="a" style="left:583px;top:670px;width:7px;height:3px;background:#2a7fd6;border-radius:1px"></div>
<div class="a" style="left:194px;top:674px;width:20px;height:19px;border:1px solid #bcbcbc;border-radius:4px;background:#f7f7f7"></div>
<div class="a" style="left:966px;top:674px;width:20px;height:19px;border:1px solid #bcbcbc;border-radius:4px;background:#f7f7f7"></div>
<svg class="a" style="left:194px;top:673px" width="791" height="20" viewBox="194 673 791 20"><path d="M205 679.700v8.600l-5.600-4.300z" fill="#9c9c9c"/><path d="M974.400 679.700v8.600l5.600-4.300z" fill="#9c9c9c"/></svg>
<div class="a" style="left:0;top:693px;width:985px;height:22px;background:#e5e5e5;border-top:1px solid #bdbdbd"></div>
<div class="a" style="left:193px;top:694px;width:1px;height:21px;background:#c4c4c4"></div>
<svg class="a" style="left:0;top:694px" width="985" height="21" viewBox="0 694 985 21"><path d="M9 699.500v11" stroke="#8a8a8a" stroke-width="1.800"/><path d="M18 699.500v11l-7.600-5.500z" fill="#8a8a8a"/><g fill="none" stroke="#6a6a6a" stroke-width="1.100"><path d="M799.400 707.800h-2a0.800 0.800 0 0 1 -0.800-0.800v-7.600a0.800 0.800 0 0 1 0.800-0.800h10.600a0.800 0.800 0 0 1 0.800 0.800v1.600"/><rect x="799.400" y="701" width="12" height="10" rx="0.800" fill="#e5e5e5"/><rect x="801.400" y="703" width="8" height="6" stroke-width="0.900"/><path d="M802 707.500l1.700-1.800l1.500 1.300l1.300-1.500l2 2" stroke-width="0.900"/></g></svg>
<div class="t" style="left:816.0px;top:697.2px;font-size:13px;line-height:15px;transform:scaleX(0.918);color:#4a4a4a;">Image Sequence Session (2-D)</div>

</body></html>
